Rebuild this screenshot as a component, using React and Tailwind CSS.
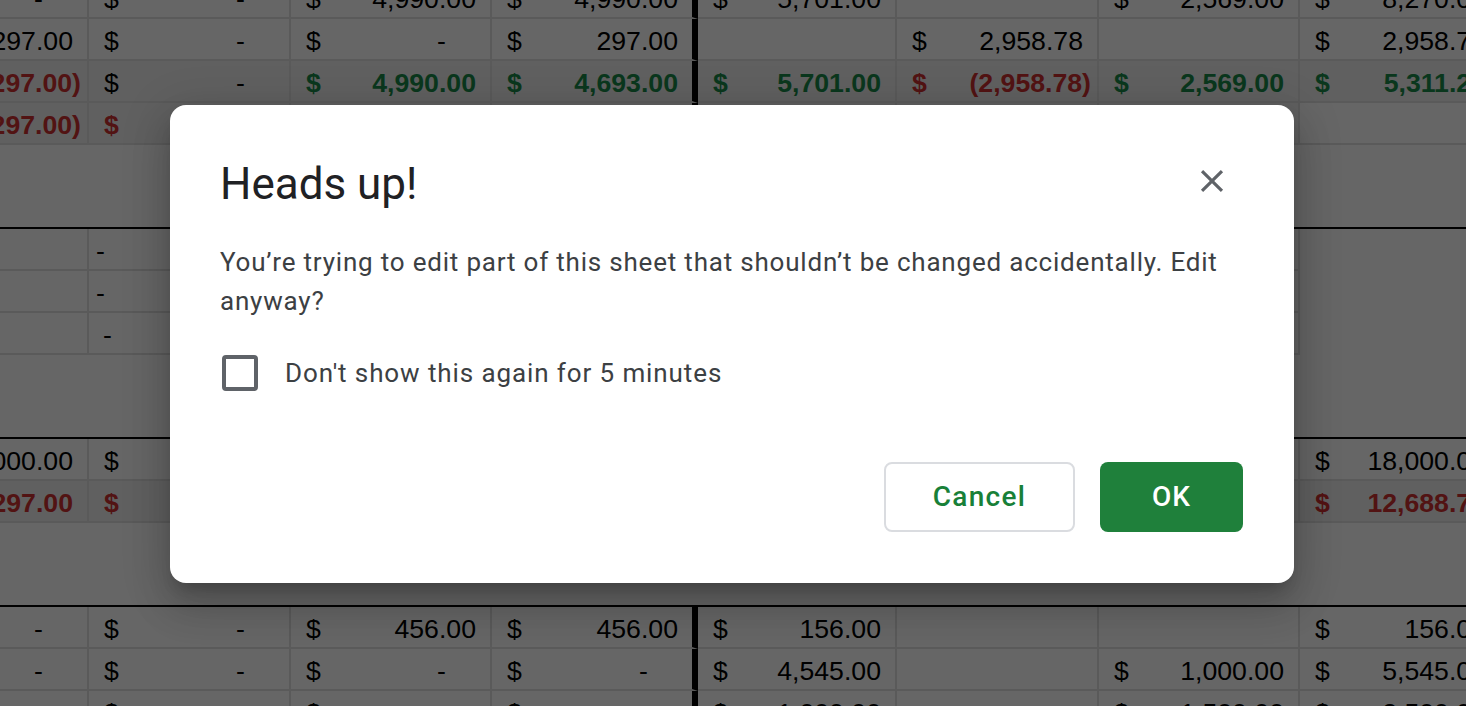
import React from 'react';

// column shells: A is cut off at the left edge, D carries the thick divider
const colClass = [
  'w-[89px] min-w-[89px] border-r-2 border-r-[#e2e2e2]',
  'w-[202px] min-w-[202px] border-r-2 border-r-[#e2e2e2]',
  'w-[201px] min-w-[201px] border-r-2 border-r-[#e2e2e2]',
  'w-[206px] min-w-[206px] border-r-[6px] border-r-black',
  'w-[199px] min-w-[199px] border-r-2 border-r-[#e2e2e2]',
  'w-[202px] min-w-[202px] border-r-2 border-r-[#e2e2e2]',
  'w-[201px] min-w-[201px] border-r-2 border-r-[#e2e2e2]',
  'w-[202px] min-w-[202px] border-r-2 border-r-[#e2e2e2]',
];

const toneClass = {
  k: 'text-black',
  g: 'text-[#1a8a4a]',
  r: 'text-[#cc3030]',
};

const a = (v, tone = 'k', bold = false) => ({ kind: 'acct', v, tone, bold });
const t = (v, pad) => ({ kind: 'text', v, pad });

const rows = [
  { cells: [a('-'), a('-'), a('4,990.00'), a('4,990.00'), a('5,701.00'), null, a('2,569.00'), a('8,270.00')] },
  { cells: [a('297.00'), a('-'), a('-'), a('297.00'), null, a('2,958.78'), null, a('2,958.78')] },
  {
    shade: [1, 1, 1, 1, 1, 1, 1, 1],
    cells: [
      a('(297.00)', 'r', true), a('-'), a('4,990.00', 'g', true), a('4,693.00', 'g', true),
      a('5,701.00', 'g', true), a('(2,958.78)', 'r', true), a('2,569.00', 'g', true), a('5,311.22', 'g', true),
    ],
  },
  {
    shade: [1, 1, 1, 1, 1, 1, 1, 0],
    cells: [a('(297.00)', 'r', true), a('(297.00)', 'r', true), null, null, null, null, null, null],
  },
  'band',
  { merged: true, cells: [null, t('-', 'pl-[7px]'), null, null, null, null, null, null] },
  { merged: true, cells: [null, t('-', 'pl-[7px]'), null, null, null, null, null, null] },
  { merged: true, cells: [null, t('-', 'pl-[14px]'), null, null, null, null, null, null] },
  'band',
  { cells: [a('18,000.00'), a('-'), null, null, null, null, null, a('18,000.00')] },
  {
    shade: [1, 1, 1, 1, 1, 1, 1, 1],
    cells: [a('5,297.00', 'r', true), a('5,297.00', 'r', true), null, null, null, null, null, a('12,688.78', 'r', true)],
  },
  'band',
  { cells: [a('-'), a('-'), a('456.00'), a('456.00'), a('156.00'), null, null, a('156.00')] },
  { cells: [a('-'), a('-'), a('-'), a('-'), a('4,545.00'), null, a('1,000.00'), a('5,545.00')] },
  { cells: [a('-'), a('-'), a('-'), a('-'), a('1,000.00'), null, a('1,500.00'), a('2,500.00')] },
];

const valuePad = (v) => {
  if (v === '-') return 'pr-[44px]';
  if (v.endsWith(')')) return 'pr-[6px]';
  return 'pr-[14px]';
};

const Cell = ({ col, cell, shaded, noBottom }) => {
  const base = `flex h-full shrink-0 items-end pb-[3px] leading-[30px] overflow-hidden ${colClass[col]} ${
    noBottom ? '' : 'border-b-2 border-b-[#e2e2e2]'
  } ${shaded ? 'bg-[#f0f0f0]' : 'bg-white'}`;

  if (!cell) return <div className={base} />;

  if (cell.kind === 'text') {
    return (
      <div className={base}>
        <span className={cell.pad}>{cell.v}</span>
      </div>
    );
  }

  const tone = `${toneClass[cell.tone]} ${cell.bold ? 'font-bold' : ''}`;

  // column A only shows the tail of its value
  if (col === 0) {
    return (
      <div className={`${base} justify-end ${valuePad(cell.v)}`}>
        <span className={`whitespace-nowrap ${tone}`}>{cell.v}</span>
      </div>
    );
  }

  return (
    <div className={`${base} justify-between pl-[15px] ${valuePad(cell.v)}`}>
      <span className={tone}>$</span>
      <span className={`whitespace-nowrap ${tone}`}>{cell.v}</span>
    </div>
  );
};

const Sheet = () => (
  <div className="-mt-[23px] flex flex-col font-['Liberation_Sans',Arial,sans-serif] text-[26.67px] text-black">
    {rows.map((row, i) =>
      row === 'band' ? (
        <div key={i} className="h-[84px] w-[1502px] border-b-2 border-b-black bg-white" />
      ) : (
        <div key={i} className="flex h-[42px]">
          {row.cells.map((cell, c) => (
            <Cell
              key={c}
              col={c}
              cell={cell}
              shaded={row.shade ? row.shade[c] === 1 : false}
              noBottom={row.merged && c === 7}
            />
          ))}
        </div>
      )
    )}
  </div>
);

const CloseIcon = () => (
  <svg width="38" height="38" viewBox="0 0 24 24" fill="#5f6368">
    <path d="M19 6.41L17.59 5 12 10.59 6.41 5 5 6.41 10.59 12 5 17.59 6.41 19 12 13.41 17.59 19 19 17.59 13.41 12z" />
  </svg>
);

const HeadsUpDialog = () => (
  <div className="absolute left-[170px] top-[105px] w-[1124px] rounded-[16px] bg-white px-[50px] pb-[51px] pt-[53px] font-['Roboto',Arial,sans-serif] shadow-[0_24px_38px_3px_rgba(0,0,0,0.14),0_9px_46px_8px_rgba(0,0,0,0.12),0_11px_15px_-7px_rgba(0,0,0,0.2)]">
    <div className="flex items-start justify-between">
      <h2 className="text-[44px] font-normal leading-[52px] text-[#202124]">Heads up!</h2>
      <button className="mr-[13px] mt-[4px] flex">
        <CloseIcon />
      </button>
    </div>

    <p className="mt-[33px] text-[26px] leading-[39px] tracking-[0.8px] text-[#3c4043]">
      You’re trying to edit part of this sheet that shouldn’t be changed accidentally. Edit anyway?
    </p>

    <label className="ml-[2px] mt-[34px] flex items-center gap-[27px]">
      <span className="h-[36px] w-[36px] rounded-[4px] border-[4px] border-[#5f6368]" />
      <span className="text-[26px] leading-[36px] tracking-[0.9px] text-[#3c4043]">
        Don't show this again for 5 minutes
      </span>
    </label>

    <div className="mt-[71px] flex justify-end gap-[25px] pr-[1px]">
      <button className="flex h-[70px] w-[191px] items-center justify-center rounded-[8px] border-2 border-[#dadce0] bg-white text-[28px] font-medium tracking-[1.3px] text-[#188038]">
        Cancel
      </button>
      <button className="flex h-[70px] w-[143px] items-center justify-center rounded-[8px] bg-[#1f803b] text-[28px] font-medium tracking-[1px] text-white">
        OK
      </button>
    </div>
  </div>
);

export default function App() {
  return (
    <div className="relative h-[706px] w-[1466px] overflow-hidden bg-white">
      <Sheet />
      <div className="absolute inset-0 bg-black/60" />
      <HeadsUpDialog />
    </div>
  );
}
